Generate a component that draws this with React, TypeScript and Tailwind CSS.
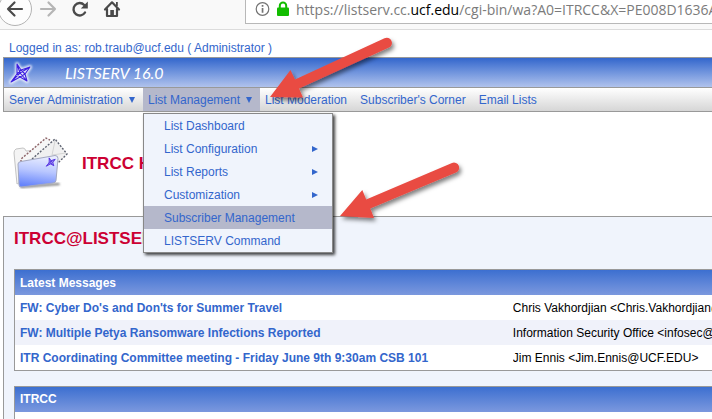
import React from "react";

const ARIAL = "font-['Liberation_Sans',Arial,sans-serif]";

function BrowserBar() {
  return (
    <header className="flex h-[30px] items-start overflow-hidden border-b border-[#dcdcdc] bg-[#f9f9f9]">
      <div className="flex w-[245px] shrink-0">
        <button type="button" aria-label="Back" className="h-[29px] w-8">
          <svg width="32" height="29" viewBox="0 0 32 29" fill="none">
            <circle cx="15" cy="9" r="16.5" fill="#fdfdfd" stroke="#b3b3b3" />
            <path d="M22 9H8M14.500 2.500L8 9l6.500 6.500" stroke="#4a4a4a" strokeWidth="2.200" strokeLinecap="round" strokeLinejoin="round" />
          </svg>
        </button>
        <button type="button" aria-label="Forward" className="h-[29px] w-8">
          <svg width="32" height="29" viewBox="0 0 32 29" fill="none">
            <path d="M9 9h14M16.500 2.500L23 9l-6.500 6.500" stroke="#b5b5b5" strokeWidth="2.200" strokeLinecap="round" strokeLinejoin="round" />
          </svg>
        </button>
        <button type="button" aria-label="Reload" className="h-[29px] w-8">
          <svg width="32" height="29" viewBox="0 0 32 29" fill="none">
            <path d="M21 12.500A6.200 6.200 0 1 1 20.200 5" stroke="#4a4a4a" strokeWidth="2.400" strokeLinecap="round" />
            <path d="M23.800 1.500v7h-7z" fill="#4a4a4a" />
          </svg>
        </button>
        <button type="button" aria-label="Home" className="h-[29px] w-8">
          <svg width="32" height="29" viewBox="0 0 32 29" fill="none">
            <path d="M9 9.500L16 2.300l7 7.200M11 9v7h10V9" stroke="#4a4a4a" strokeWidth="2.200" strokeLinecap="round" strokeLinejoin="round" />
            <path d="M14.300 10h3.600v6h-3.600zM20 2h1.800v4H20z" fill="#4a4a4a" />
          </svg>
        </button>
      </div>
      <div className="flex h-6 min-w-0 flex-1 items-start gap-[7px] border-b border-l border-[#b8b8b8] bg-white pl-[9px]">
        <svg className="shrink-0" width="15" height="19" viewBox="0 0 15 19" fill="none">
          <circle cx="7.500" cy="9" r="6.300" stroke="#737373" strokeWidth="1.200" />
          <path d="M6.700 8h1.700v4.800H6.700zM6.700 5h1.700v1.700H6.700z" fill="#737373" />
        </svg>
        <svg className="shrink-0" width="12" height="19" viewBox="0 0 12 19" fill="none">
          <path d="M2.800 8V5.800a3.200 3.200 0 0 1 6.400 0V8" stroke="#12bc00" strokeWidth="2" />
          <rect y="7.500" width="12" height="8.500" rx="1" fill="#12bc00" />
        </svg>
        <div className="font-['Open_Sans','Noto_Sans',sans-serif] text-[14px] leading-5 whitespace-nowrap text-[#7b7b7b]">
          https://listserv.cc.<span className="text-black">ucf.edu</span>/cgi-bin/wa?A0=ITRCC&amp;X=PE008D1636A0
        </div>
      </div>
    </header>
  );
}

const STAR = "M8 2l4 6 9-3-5 7 2 7-7-4-9 5 6-8zM8 2l3 9 7 8M21 5l-10 6-9 9M12 8l-4 4 3 3 5-3z";

function Star() {
  return (
    <svg className="h-[22px] w-[22px] overflow-visible" viewBox="0 0 22 22" fill="none" strokeLinejoin="round">
      <defs>
        <filter id="starGlow" x="-30%" y="-30%" width="160%" height="160%">
          <feGaussianBlur stdDeviation="1.200" />
        </filter>
      </defs>
      <path d={STAR} stroke="#fff" strokeOpacity=".8" strokeWidth="4" filter="url(#starGlow)" />
      <path d={STAR} stroke="#3d1fe0" strokeWidth="1.100" />
    </svg>
  );
}

function FolderIcon() {
  return (
    <svg width="58" height="56" viewBox="0 0 58 56" fill="none" className="shrink-0">
      <defs>
        <linearGradient id="folder" x1="30" y1="18" x2="26" y2="50" gradientUnits="userSpaceOnUse">
          <stop stopColor="#eef1ff" />
          <stop offset=".5" stopColor="#b9c7ff" />
          <stop offset="1" stopColor="#6684fb" />
        </linearGradient>
        <filter id="folderShade" x="-20%" y="-20%" width="140%" height="140%">
          <feGaussianBlur stdDeviation="1" />
        </filter>
      </defs>
      <path d="M7 49l39-3 1 2-39 3z" fill="#777" filter="url(#folderShade)" />
      <path d="M4 47L1 16q0-3 2-4l7-1q2 0 3 3l30-2v12z" fill="#f4f4f4" stroke="#c4c4c4" />
      <path d="M8 25v-3L33 1l4 2-2 22-26 2z" fill="#f6f6f6" />
      <path d="M8 25v-3L33 1l4 2" stroke="#8d6468" strokeWidth="1.400" strokeDasharray="2 1.500" />
      <path d="M19 22L42 2l12 15-10 10-24-3z" fill="#f0f0f0" />
      <path d="M19 22L42 2l12 15-9 9" stroke="#5f6472" strokeWidth="1.400" strokeDasharray="2 1.500" />
      <path d="M42 4l-3 14 14-2" stroke="#d5d5d5" />
      <path d="M8 24.500L42 18.500q3 0 3 3l-2 22q0 2-3 2.500L8 50q-2 0-2-2L5 27q0-2 3-2.500z" fill="url(#folder)" stroke="#a3a8c0" />
      <path d={STAR} transform="translate(32.500 20) scale(.46)" stroke="#5533e0" strokeWidth="2" strokeLinejoin="round" />
    </svg>
  );
}

const MENU: { label: string; sub?: boolean; active?: boolean }[] = [
  { label: "List Dashboard" },
  { label: "List Configuration", sub: true },
  { label: "List Reports", sub: true },
  { label: "Customization", sub: true },
  { label: "Subscriber Management", active: true },
  { label: "LISTSERV Command" },
];

function Nav() {
  const down = (
    <svg width="6" height="6" viewBox="0 0 6 6" className="shrink-0">
      <path d="M0 0h6L3 6z" fill="#3366cc" />
    </svg>
  );
  return (
    <nav className="flex h-6 border-b border-[#999] bg-linear-to-b from-white to-[#d6d6d6] whitespace-nowrap">
      <button type="button" className="flex w-[139px] shrink-0 items-center gap-[6px] pl-[5px]">
        Server Administration {down}
      </button>
      <div className="relative flex w-[117px] shrink-0">
        <button type="button" aria-expanded="true" className="flex w-full items-center gap-[6px] bg-[#b5b8cb] pl-[5px]">
          List Management {down}
        </button>
        <ul className="absolute top-[25px] left-0 z-10 w-[190px] border border-[#888] bg-[#f0f4fc] shadow-[2px_2px_3px_rgba(0,0,0,0.75)]">
          {MENU.map((m) => (
            <li key={m.label}>
              <a
                href="#"
                className={`flex h-[23px] items-center justify-between pr-[14px] pl-5 ${m.active ? "bg-[#b5b8cb]" : ""}`}
              >
                {m.label}
                {m.sub && (
                  <svg width="6" height="6" viewBox="0 0 6 6">
                    <path d="M0 0v6l6-3z" fill="#3366cc" />
                  </svg>
                )}
              </a>
            </li>
          ))}
        </ul>
      </div>
      <div className="flex items-center gap-[13px] pl-[5px]">
        <a href="#">List Moderation</a>
        <a href="#">Subscriber's Corner</a>
        <a href="#">Email Lists</a>
      </div>
    </nav>
  );
}

const MESSAGES = [
  ["FW: Cyber Do's and Don'ts for Summer Travel", "Chris Vakhordjian <Chris.Vakhordjian@ucf.edu>"],
  ["FW: Multiple Petya Ransomware Infections Reported", "Information Security Office <infosec@ucf.edu>"],
  ["ITR Coordinating Committee meeting - Friday June 9th 9:30am CSB 101", "Jim Ennis <Jim.Ennis@UCF.EDU>"],
];

const HEAD = "h-[25px] bg-linear-to-b from-[#3c6fd0] to-[#7b98de] pl-[5px] text-left font-bold text-white";

function Arrows() {
  return (
    <svg className="pointer-events-none absolute top-0 left-0 z-20" width="480" height="240" viewBox="0 0 480 240">
      <defs>
        <filter id="arrowShade" x="-20%" y="-20%" width="140%" height="150%">
          <feDropShadow dx="2" dy="3" stdDeviation="2" floodColor="#000" floodOpacity=".5" />
        </filter>
      </defs>
      <g fill="#e94b43" filter="url(#arrowShade)">
        <path d="M270 97L290.500 70l4.500 9.500L384.500 38.200a5.200 5.200 0 0 1 4.500 9.400L299 88.500l4 9z" />
        <path d="M340 216L362.300 190l3.900 9.500L452 163a5.200 5.200 0 0 1 4 9.600L370.300 208.500l3.700 9.500z" />
      </g>
    </svg>
  );
}

export default function App() {
  return (
    <div className={`relative h-screen overflow-hidden bg-white text-[12px] leading-4 text-[#3366cc] ${ARIAL}`}>
      <BrowserBar />
      <main className="pl-[3px]">
        <p className="h-[27px] pt-[10px] pl-[6px]">
          <a href="#">Logged in as: rob.traub@ucf.edu ( Administrator )</a>
        </p>
        <div className="border-t border-l border-[#999]">
          <div className="flex h-[30px] items-center border-b border-[#999] bg-linear-to-b from-[#3366cc] to-[#b0c2ec] pl-[5px]">
            <Star />
            <span className="pl-[34px] font-['Lato',sans-serif] text-[16px] text-white italic">LISTSERV 16.0</span>
          </div>
          <Nav />
        </div>
        <div className="flex h-[104px] items-start pt-[25px] pl-[10px] text-[17px] leading-5 font-bold text-[#cc0033]">
          <FolderIcon />
          <h1 className="pt-[17px] pl-[11px]">ITRCC Home</h1>
        </div>
        <section className="border-t border-l border-[#999] bg-[#f0f4fc] pl-[10px]">
          <h2 className="h-[52px] pt-[12px] text-[17px] leading-5 font-bold text-[#cc0033]">ITRCC@LISTSERV.CC.UCF.EDU</h2>
          <div className="overflow-hidden border-y border-l border-[#999]">
            <table className="w-full table-fixed border-collapse whitespace-nowrap">
              <colgroup>
                <col className="w-5/7" />
                <col />
              </colgroup>
              <thead>
                <tr>
                  <th colSpan={2} className={HEAD}>Latest Messages</th>
                </tr>
              </thead>
              <tbody>
                {MESSAGES.map(([title, from]) => (
                  <tr key={title} className="h-[25px] bg-white even:bg-[#f0f2fa]">
                    <td className="pl-[5px] font-bold">
                      <a href="#">{title}</a>
                    </td>
                    <td className="overflow-hidden text-black">{from}</td>
                  </tr>
                ))}
              </tbody>
            </table>
          </div>
          <div className="mt-[15px] border-t border-l border-[#999]">
            <h3 className={`${HEAD} leading-[25px]`}>ITRCC</h3>
            <div className="h-4 bg-white" />
          </div>
        </section>
      </main>
      <Arrows />
    </div>
  );
}
